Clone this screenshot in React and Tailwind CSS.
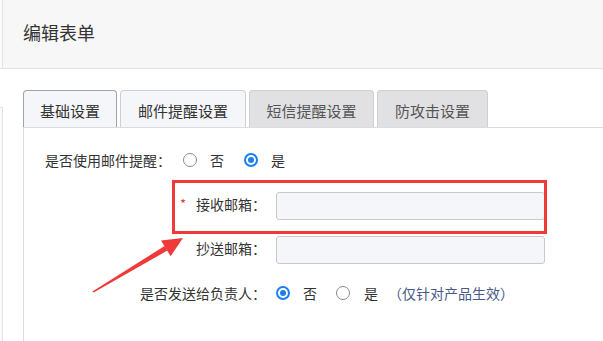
import React from "react";

function Radio({ checked, className = "" }) {
  if (checked) {
    return (
      <span className={"flex h-[14px] w-[14px] shrink-0 items-center justify-center rounded-full border-2 border-[#1a7ff0] bg-white " + className}>
        <span className="block h-[6px] w-[6px] rounded-full bg-[#1a7ff0]" />
      </span>
    );
  }
  return <span className={"block h-[14px] w-[14px] shrink-0 rounded-full border border-[#8a8a8a] bg-white " + className} />;
}

export default function App() {
  return (
    <div className="relative flex h-[341px] w-[603px] overflow-hidden bg-white font-['Noto_Sans_CJK_SC',sans-serif] text-[#333]">
      {/* left edge strip */}
      <div className="flex w-[3px] shrink-0 flex-col">
        <div className="h-[69px] border-r border-b border-[#e3e3e3] bg-[#fbfbfb]" />
        <div className="h-[38px]" />
        <div className="flex-1 border-t border-r border-[#e3e3e3] bg-[#fafafa]" />
      </div>

      <div className="flex min-w-0 flex-1 flex-col">
        {/* header */}
        <div className="flex h-[69px] items-center border-b border-[#e2e2e2] bg-[#f7f7f7] pb-[4px] pl-[20px] text-[18px] leading-none">
          编辑表单
        </div>

        <div className="flex flex-1 flex-col pl-[20px] pt-[21px]">
          {/* tabs */}
          <div className="flex h-[37px] items-stretch gap-[3px] text-[15px] leading-none">
            <div className="flex w-[94px] items-center justify-center rounded-t-[4px] border border-b-0 border-[#a3a3a3] bg-[#f5f6fa] pt-[3px] text-[#333]">
              基础设置
            </div>
            <div className="flex w-[126px] items-center justify-center rounded-t-[4px] border border-b-0 border-[#cfcfcf] bg-[#f5f6fa] pt-[3px] text-[#333]">
              邮件提醒设置
            </div>
            <div className="flex w-[125px] items-center justify-center rounded-t-[4px] border border-b-0 border-[#cfcfcf] bg-[#e1e1e3] pt-[3px] text-[#555]">
              短信提醒设置
            </div>
            <div className="flex w-[111px] items-center justify-center rounded-t-[4px] border border-b-0 border-[#cfcfcf] bg-[#e1e1e3] pt-[3px] text-[#555]">
              防攻击设置
            </div>
          </div>

          {/* panel */}
          <div className="flex flex-1 flex-col border-t border-l border-[#dcdcdc] pt-[22px] text-[14px] leading-[20px]">
            {/* row 1 */}
            <div className="flex h-[20px] items-center pl-[21px]">
              <span>是否使用邮件提醒：</span>
              <Radio className="ml-[12px]" />
              <span className="ml-[13px]">否</span>
              <Radio checked className="ml-[20px]" />
              <span className="ml-[13px]">是</span>
            </div>

            {/* row 2 */}
            <div className="mt-[22px] flex h-[28px] items-center">
              <div className="flex w-[242px] items-center justify-end pb-[5px]">
                <span className="mr-[10px] text-[13px] text-[#e84040]">*</span>
                <span>接收邮箱：</span>
              </div>
              <div className="ml-[10px] h-[28px] w-[269px] rounded-[3px] border border-[#c9c9c9] bg-[#f5f6fa]" />
            </div>

            {/* row 3 */}
            <div className="mt-[16px] flex h-[28px] items-center">
              <div className="flex w-[242px] justify-end pb-[5px]">
                <span>抄送邮箱：</span>
              </div>
              <div className="ml-[10px] h-[28px] w-[269px] rounded-[3px] border border-[#c9c9c9] bg-[#f5f6fa]" />
            </div>

            {/* row 4 */}
            <div className="mt-[19px] flex h-[20px] items-center">
              <div className="flex w-[242px] justify-end">
                <span>是否发送给负责人：</span>
              </div>
              <Radio checked className="ml-[10px]" />
              <span className="ml-[13px]">否</span>
              <Radio className="ml-[19px]" />
              <span className="ml-[14px]">是</span>
              <span className="ml-[10px] text-[#485a88]">（仅针对产品生效）</span>
            </div>
          </div>
        </div>
      </div>

      {/* annotation: red box */}
      <div className="pointer-events-none absolute left-[172px] top-[180px] h-[54px] w-[375px] border-[3px] border-[#f03a3a]" />

      {/* annotation: arrow */}
      <svg className="pointer-events-none absolute left-0 top-0" width="603" height="341" viewBox="0 0 603 341">
        <polygon points="92.4,291.4 93.6,292.6 167.3,250.6 164.6,246.0" fill="#f03a3a" />
        <polygon points="183,238 161,240.4 170.6,256.2" fill="#f03a3a" />
      </svg>
    </div>
  );
}
